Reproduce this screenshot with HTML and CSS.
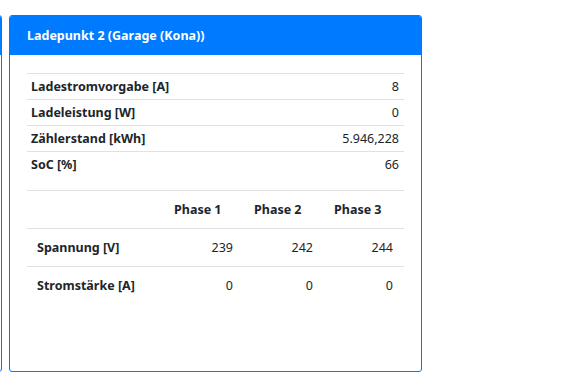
FILE: index.html
```html
<!DOCTYPE html>
<html lang="de">
<head>
  <meta charset="UTF-8" />
  <meta name="viewport" content="width=device-width, initial-scale=1.0"/>
  <title>Ladepunkt Status</title>
  <link rel="stylesheet" href="styles.css">
</head>
<body>

  <div class="deck">
    <!-- previous card, scrolled mostly out of view -->
    <div class="card card-prev">
      <div class="card-header"></div>
    </div>

    <!-- Ladepunkt 2 -->
    <div class="card">
      <div class="card-header">Ladepunkt 2 (Garage (Kona))</div>
      <div class="card-body">
        <table class="table table-sm">
          <tr>
            <th>Ladestromvorgabe [A]</th>
            <td>8</td>
          </tr>
          <tr>
            <th>Ladeleistung [W]</th>
            <td>0</td>
          </tr>
          <tr>
            <th>Zählerstand [kWh]</th>
            <td>5.946,228</td>
          </tr>
          <tr>
            <th>SoC [%]</th>
            <td>66</td>
          </tr>
        </table>

        <table class="table table-phases">
          <tr>
            <th></th>
            <th class="phase">Phase 1</th>
            <th class="phase">Phase 2</th>
            <th class="phase">Phase 3</th>
          </tr>
          <tr>
            <th>Spannung [V]</th>
            <td>239</td>
            <td>242</td>
            <td>244</td>
          </tr>
          <tr>
            <th>Stromstärke [A]</th>
            <td>0</td>
            <td>0</td>
            <td>0</td>
          </tr>
        </table>
      </div>
    </div>
  </div>

</body>
</html>
```

FILE: styles.css
```css
:root {
  --primary: #007bff;
  --text: #212529;
  --line: #dee2e6;
}

body {
  margin: 0;
  padding: 0;
  font-family: 'Noto Sans', 'Open Sans', sans-serif;
  font-size: 12.5px;
  color: var(--text);
  background: #fff;
}

.deck {
  display: flex;
  gap: 7px;
  padding-top: 15px;
  margin-left: -198px;
}

.card {
  box-sizing: border-box;
  width: 413px;
  height: 357px;
  border: 1px solid var(--primary);
  border-radius: 3px;
  overflow: hidden;
  flex-shrink: 0;
}

.card-prev {
  width: 200px;
}

.card-header {
  height: 39px;
  display: flex;
  align-items: center;
  padding: 0 17px;
  background: var(--primary);
  color: #fff;
  font-weight: bold;
}

.card-body {
  padding: 18px 17px;
}

.table {
  width: 100%;
  border-collapse: collapse;
}

.table th,
.table td {
  border-top: 1px solid var(--line);
  line-height: 17px;
  vertical-align: middle;
}

.table th {
  text-align: left;
  font-weight: bold;
}

.table td {
  text-align: right;
}

.table-sm {
  margin-bottom: 13px;
}

.table-sm th,
.table-sm td {
  padding: 4px 5px 4px 4px;
}

.table-phases th,
.table-phases td {
  padding: 10px 11px 10px 10px;
}

.table-phases .phase,
.table-phases td {
  width: 59px;
}
```
